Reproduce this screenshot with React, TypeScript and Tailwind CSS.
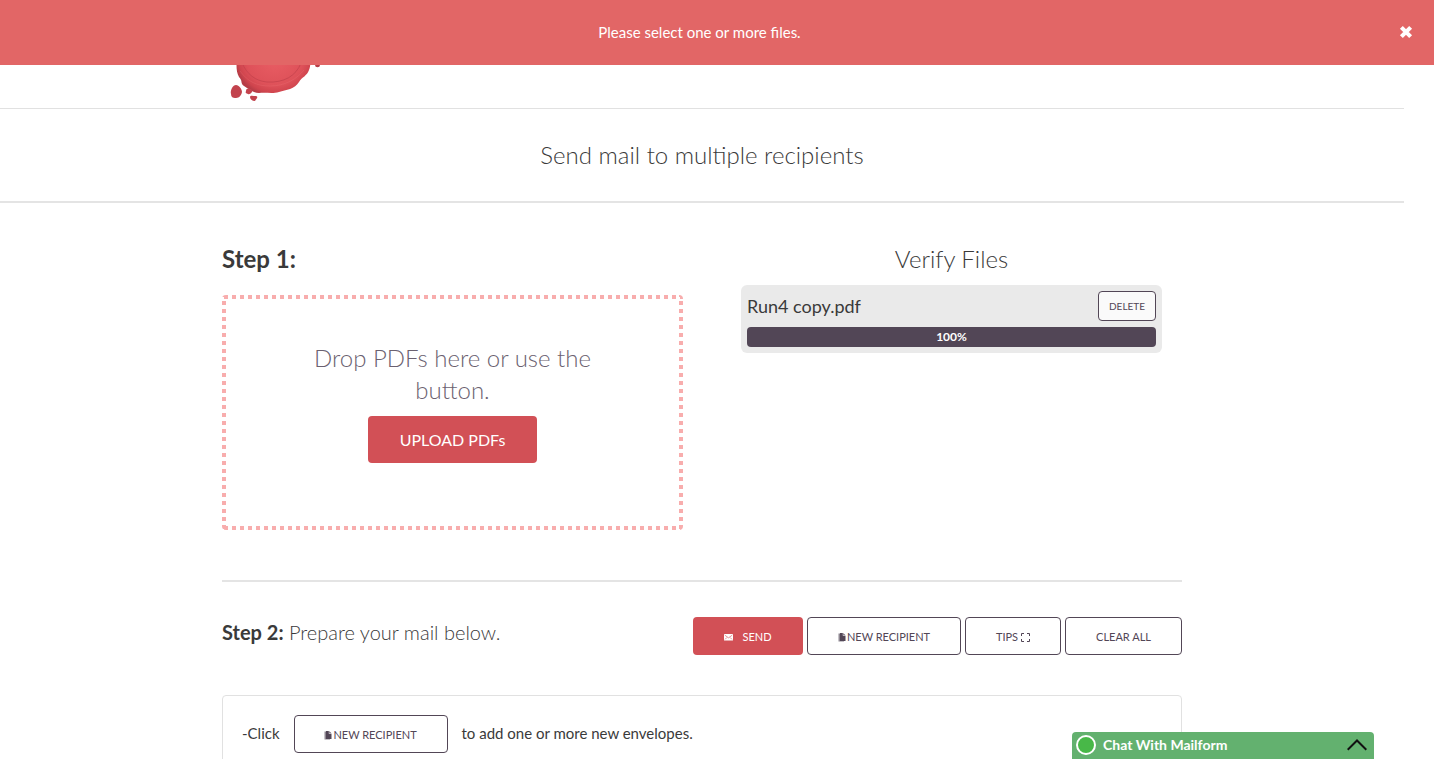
import type { ButtonHTMLAttributes } from "react";

const outline =
  "flex h-[38px] items-center justify-center rounded border border-[#524656] bg-white pt-[2px] text-[11px] text-[#524656]";

function Copy() {
  return (
    <svg className="mr-px h-[9px] w-2" viewBox="0 0 8 9" aria-hidden="true">
      <path d="M0.5 0.500H3V7.5H6V8.500H0.5Z" fill="#524656" opacity="0.65" />
      <path d="M2 0H4.800V2.800H7.500V8H2Z" fill="#524656" />
      <path d="M5.200 0L7.500 2.300H5.200Z" fill="#524656" opacity="0.8" />
    </svg>
  );
}

function Envelope() {
  return (
    <svg className="h-[7px] w-[9px]" viewBox="0 0 9 7" aria-hidden="true">
      <rect width="9" height="6.5" rx="0.6" fill="#fff" />
      <path d="M0.8 1.2L4.5 3.8L8.2 1.2M1 5.4L3 3.4M8 5.4L6 3.4" fill="none" stroke="#d25056" strokeWidth="0.6" />
    </svg>
  );
}

function Expand() {
  return (
    <svg className="ml-[3px] h-[9px] w-[9px]" viewBox="0 0 9 9" aria-hidden="true">
      <path
        d="M0.5 3V0.5H3M6 0.5H8.5V3M8.5 6V8.5H6M3 8.5H0.5V6"
        fill="none"
        stroke="#524656"
        strokeWidth="1"
      />
    </svg>
  );
}

function NewRecipient(props: ButtonHTMLAttributes<HTMLButtonElement>) {
  return (
    <button type="button" className={`${outline} w-[154px]`} {...props}>
      <Copy />
      NEW RECIPIENT
    </button>
  );
}

function Seal() {
  return (
    <svg className="h-[82px] w-[100px]" viewBox="0 0 100 82" role="img" aria-label="Mailform">
      <defs>
        <radialGradient id="wax" cx="0.52" cy="0.5" r="0.55">
          <stop offset="0" stopColor="#ea5f65" />
          <stop offset="0.72" stopColor="#de5159" />
          <stop offset="0.9" stopColor="#d0454e" />
          <stop offset="1" stopColor="#b63c46" />
        </radialGradient>
      </defs>
      <path
        d="M9 20C12 4 28 0 45 0C66 0 77 10 79 28C81 37 84 43 81 50C79 56 74 57 71 62C67 69 58 70 51 72C44 74 38 72 31 73C25 73 21 69 16 66C12 63 15 61 11 57C7 50 9 43 9 20Z"
        fill="url(#wax)"
      />
      <path d="M14 43C19 54 27 61 39 62C56 63 68 56 73 43" fill="none" stroke="#c4434d" strokeWidth="0.8" />
      <path d="M12 51C20 62 29 66 42 66C57 66 69 59 76 50" fill="none" stroke="#ee747a" strokeWidth="0.8" opacity="0.35" />
      <path d="M3 74C2 70 5 65 8 65C11 65 14 69 14 72C13 77 10 78 7 78C5 78 3 77 3 74Z" fill="#c2434d" />
      <path d="M18 71C18 68 22 68 24 70C25 72 22 75 20 74C18 73 17 73 18 71Z" fill="#c4434d" />
      <path d="M22 77C22 75 25 76 28 76C31 77 28 79 27 81C24 81 22 79 22 77Z" fill="#c2434d" />
      <ellipse cx="89.500" cy="45" rx="2.500" ry="2.200" fill="#b63c46" />
    </svg>
  );
}

const dotted =
  "bg-[repeating-linear-gradient(to_right,transparent_0_2px,#f8adad_2px_6px,transparent_6px_8px),repeating-linear-gradient(to_right,transparent_0_2px,#f8adad_2px_6px,transparent_6px_8px),repeating-linear-gradient(to_bottom,#f8adad_0_2px,transparent_2px_6px,#f8adad_6px_8px),repeating-linear-gradient(to_bottom,#f8adad_0_2px,transparent_2px_6px,#f8adad_6px_8px)] bg-[position:left_top,left_bottom,left_top,right_top] bg-[size:100%_4px,100%_4px,4px_100%,4px_100%] bg-no-repeat";

export default function App() {
  return (
    <div className="min-h-screen overflow-x-hidden bg-white font-['Lato',sans-serif] text-[#3a3a3a]">
      <div role="alert" className="fixed inset-x-0 top-0 z-20 flex h-[65px] items-center bg-[#e26666] text-white">
        <p className="flex-1 text-center text-[15px]">Please select one or more files.</p>
        <button type="button" aria-label="Close" className="mr-[21px] flex w-[14px] justify-center pb-[2px]">
          <svg className="h-[14px] w-[14px]" viewBox="0 0 13 13" aria-hidden="true">
            <path d="M2.200 2.200L10.800 10.800M10.800 2.200L2.200 10.800" stroke="#fff" strokeWidth="3.800" />
          </svg>
        </button>
      </div>

      <div className="pr-[30px]">
        <header className="h-[109px] border-b border-[#e1e1e1]">
          <div className="mx-auto max-w-[960px] px-[6px] pt-5">
            <Seal />
          </div>
        </header>
        <div className="flex h-[94px] items-center justify-center border-b-2 border-[#e4e4e4]">
          <h1 className="text-[24px] font-light leading-8">Send mail to multiple recipients</h1>
        </div>

        <main className="mx-auto max-w-[960px]">
          <div className="grid grid-cols-2 gap-[38px] border-b-2 border-[#e4e4e4] pt-10 pb-[50px]">
            <section>
              <h2 className="text-[24px] font-bold leading-8">Step 1:</h2>
              <div className={`mt-5 flex h-[235px] flex-col items-center rounded pt-[47px] ${dotted}`}>
                <p className="w-[300px] text-center text-[24px] font-light leading-8 text-[#6b6170]">
                  Drop PDFs here or use the button.
                </p>
                <button type="button" className="mt-[10px] h-[47px] w-[169px] rounded bg-[#d25056] text-[16px] text-white">
                  UPLOAD PDFs
                </button>
              </div>
            </section>
            <section className="px-5">
              <h2 className="text-center text-[24px] font-light leading-8">Verify Files</h2>
              <div className="mt-[10px] rounded-md bg-[#eaeaea] p-[6px]">
                <div className="flex items-center justify-between">
                  <span className="text-[18px]">Run4 copy.pdf</span>
                  <button
                    type="button"
                    className="h-[30px] w-[58px] rounded border border-[#524656] bg-[#fafafa] text-[10px] text-[#524656]"
                  >
                    DELETE
                  </button>
                </div>
                <div
                  role="progressbar"
                  aria-label="Upload progress"
                  aria-valuenow={100}
                  className="mt-[6px] h-5 rounded bg-[#524656] text-center text-[12px] font-bold leading-5 text-white"
                >
                  100%
                </div>
              </div>
            </section>
          </div>

          <section className="pt-[35px]">
            <div className="flex items-center justify-between">
              <h2 className="-mt-2 text-[20px] font-light leading-6">
                <b className="font-bold">Step 2:</b> Prepare your mail below.
              </h2>
              <div className="flex gap-1">
                <button
                  type="button"
                  className="flex h-[38px] w-[110px] items-center justify-center gap-[9px] rounded bg-[#d25056] pt-[2px] text-[11px] text-white"
                >
                  <Envelope />
                  SEND
                </button>
                <NewRecipient />
                <button type="button" className={`${outline} w-[96px]`}>
                  TIPS
                  <Expand />
                </button>
                <button type="button" className={`${outline} w-[117px]`}>
                  CLEAR ALL
                </button>
              </div>
            </div>
            <div className="mt-10 rounded border border-[#e1e1e1] px-[19px] pt-[19px] pb-12">
              <div className="flex items-center gap-[14px] text-[15px] leading-5">
                <span className="pb-[2px]">-Click</span>
                <NewRecipient />
                <span className="pb-[2px]">to add one or more new envelopes.</span>
              </div>
            </div>
          </section>
        </main>
      </div>

      <button
        type="button"
        className="fixed right-[60px] bottom-0 z-10 flex h-[27px] w-[302px] items-center rounded-t bg-[#63b16f] pr-[7px] pb-[2px] pl-1 text-white"
      >
        <span className="h-5 w-5 rounded-full border-2 border-white bg-[#48b848]" />
        <span className="ml-[7px] flex-1 text-left text-[14px] font-bold">Chat With Mailform</span>
        <svg className="h-3 w-5" viewBox="0 0 20 12" aria-hidden="true">
          <path d="M0.700 10.800L10 1.500L19.300 10.800" fill="none" stroke="#111" strokeWidth="2" />
        </svg>
      </button>
    </div>
  );
}
